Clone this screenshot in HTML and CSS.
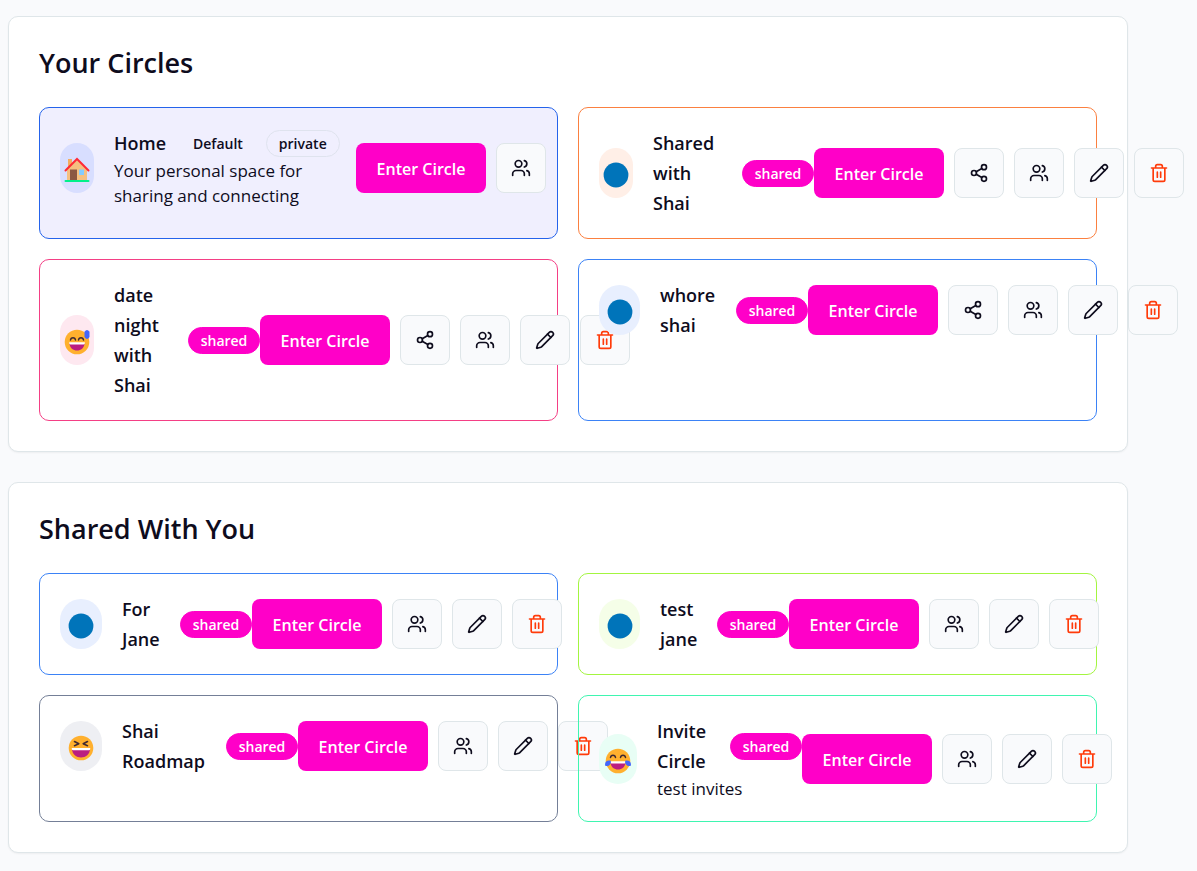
FILE: index.html
```html
<!DOCTYPE html>
<html lang="en">
<head>
<meta charset="utf-8">
<meta name="viewport" content="width=device-width, initial-scale=1">
<title>Circles</title>
<link rel="stylesheet" href="styles.css">
</head>
<body>
<svg class="sprite" aria-hidden="true">
  <symbol id="users" viewBox="0 0 24 24"><path d="M16 21v-2a4 4 0 0 0-4-4H6a4 4 0 0 0-4 4v2"/><circle cx="9" cy="7" r="4"/><path d="M22 21v-2a4 4 0 0 0-3-3.87M16 3.13a4 4 0 0 1 0 7.75"/></symbol>
  <symbol id="share" viewBox="0 0 24 24"><circle cx="18" cy="5" r="3"/><circle cx="6" cy="12" r="3"/><circle cx="18" cy="19" r="3"/><path d="M8.59 13.51l6.83 3.98M15.41 6.51l-6.82 3.98"/></symbol>
  <symbol id="pencil" viewBox="0 0 24 24"><path d="M21.174 6.812a1 1 0 0 0-3.986-3.987L3.842 16.174a2 2 0 0 0-.5.83l-1.321 4.352a.5.5 0 0 0 .623.622l4.353-1.32a2 2 0 0 0 .83-.497z"/><path d="m15 5 4 4"/></symbol>
  <symbol id="trash" viewBox="0 0 24 24"><path d="M3 6h18M19 6v14c0 1-1 2-2 2H7c-1 0-2-1-2-2V6M8 6V4c0-1 1-2 2-2h4c1 0 2 1 2 2v2M10 11v6M14 11v6"/></symbol>
  <symbol id="dot" viewBox="0 0 26 26"><circle cx="13" cy="13" r="12.4" fill="#0074ba"/></symbol>
  <symbol id="house" viewBox="0 0 26 26">
    <path d="M4 2h4v8H4z" fill="#f3ad61"/><path d="M3 12.5 13 3l10 9.5V24H3z" fill="#f5bf80"/>
    <path d="M6 12.5h7V24H6z" fill="#8b5742"/><path d="M15 12.5h5V18h-5z" fill="#83cbff"/>
    <path d="M1.5 13.5 13 2l11.5 11.5" fill="none" stroke="#ff2a36" stroke-width="2" stroke-linecap="round"/>
    <path d="M1.5 24h23" stroke="#00f08a" stroke-width="2" stroke-linecap="round"/>
  </symbol>
  <symbol id="sweat" viewBox="0 0 26 26">
    <circle cx="13" cy="13" r="12.3" fill="#ffb02e"/>
    <path d="M6.5 11c.4-3 4.6-3 5 0M14.5 11c.4-3 4.6-3 5 0" fill="none" stroke="#402a32" stroke-width="1.5" stroke-linecap="round"/>
    <path d="M5.5 14h15c0 10-15 10-15 0z" fill="#bb1d80"/><path d="M5.2 13.3h15.6v1.2q-.3 1-1.3 1h-13q-1 0-1.3-1z" fill="#fff"/>
    <path d="M20.5 2.8Q23 -1 25.5 2.800V8q-2.500 4-5 0z" fill="#4366fa"/>
  </symbol>
  <symbol id="squint" viewBox="0 0 26 26">
    <circle cx="13" cy="13" r="12.3" fill="#ffb02e"/>
    <path d="M6.5 6.5l4.3 2.2-4.3 2M19.5 6.5l-4.3 2.2 4.3 2" fill="none" stroke="#402a32" stroke-width="1.6" stroke-linecap="round" stroke-linejoin="round"/>
    <path d="M4 13.5h18c0 12-18 12-18 0z" fill="#bb1d80"/><path d="M3.8 13h18.4v1.2q-.3 1-1.3 1H5.100q-1 0-1.300-1z" fill="#fff"/>
  </symbol>
  <symbol id="joy" viewBox="0 0 26 26">
    <circle cx="13" cy="13" r="12.3" fill="#ffb02e"/>
    <path d="M5.5 9.5c.4-3 4.6-3 5 0M15.5 9.5c.4-3 4.6-3 5 0" fill="none" stroke="#402a32" stroke-width="1.5" stroke-linecap="round"/>
    <path d="M5.5 14h15c0 10-15 10-15 0z" fill="#bb1d80"/><path d="M5.2 13.3h15.6v1.2q-.3 1-1.3 1h-13q-1 0-1.3-1z" fill="#fff"/>
    <path d="M5.5 12.5C1 12 0 14 0 17.5q3 1.5 5-1 1.5-2 .5-4zM20.5 12.5C25 12 26 14 26 17.5q-3 1.5-5-1-1.5-2-.5-4z" fill="#4366fa"/>
  </symbol>
</svg>
<main class="page">
  <section class="panel" aria-labelledby="yours">
    <h2 class="panel-title" id="yours">Your Circles</h2>
    <div class="grid">
      <article class="card home">
        <div class="row">
          <span class="avatar"><svg class="emoji"><use href="#house"/></svg></span>
          <div class="info"><div class="heading"><h3 class="name">Home</h3><span class="badge plain">Default</span><span class="badge outline">private</span></div><p class="desc">Your personal space for sharing and connecting</p></div>
          <div class="actions"><button class="enter">Enter Circle</button><button class="tool" aria-label="Members"><svg class="icon"><use href="#users"/></svg></button></div>
        </div>
      </article>
      <article class="card orange">
        <div class="row">
          <span class="avatar"><svg class="emoji"><use href="#dot"/></svg></span>
          <div class="info"><div class="heading"><h3 class="name">Shared with Shai</h3><span class="badge shared">shared</span></div></div>
          <div class="actions"><button class="enter">Enter Circle</button><button class="tool" aria-label="Share"><svg class="icon"><use href="#share"/></svg></button><button class="tool" aria-label="Members"><svg class="icon"><use href="#users"/></svg></button><button class="tool" aria-label="Edit"><svg class="icon"><use href="#pencil"/></svg></button><button class="tool danger" aria-label="Delete"><svg class="icon"><use href="#trash"/></svg></button></div>
        </div>
      </article>
      <article class="card pink">
        <div class="row">
          <span class="avatar"><svg class="emoji"><use href="#sweat"/></svg></span>
          <div class="info"><div class="heading"><h3 class="name">date night with Shai</h3><span class="badge shared">shared</span></div></div>
          <div class="actions"><button class="enter">Enter Circle</button><button class="tool" aria-label="Share"><svg class="icon"><use href="#share"/></svg></button><button class="tool" aria-label="Members"><svg class="icon"><use href="#users"/></svg></button><button class="tool" aria-label="Edit"><svg class="icon"><use href="#pencil"/></svg></button><button class="tool danger" aria-label="Delete"><svg class="icon"><use href="#trash"/></svg></button></div>
        </div>
      </article>
      <article class="card blue">
        <div class="row">
          <span class="avatar"><svg class="emoji"><use href="#dot"/></svg></span>
          <div class="info"><div class="heading"><h3 class="name">whore shai</h3><span class="badge shared">shared</span></div></div>
          <div class="actions"><button class="enter">Enter Circle</button><button class="tool" aria-label="Share"><svg class="icon"><use href="#share"/></svg></button><button class="tool" aria-label="Members"><svg class="icon"><use href="#users"/></svg></button><button class="tool" aria-label="Edit"><svg class="icon"><use href="#pencil"/></svg></button><button class="tool danger" aria-label="Delete"><svg class="icon"><use href="#trash"/></svg></button></div>
        </div>
      </article>
    </div>
  </section>
  <section class="panel" aria-labelledby="shared">
    <h2 class="panel-title" id="shared">Shared With You</h2>
    <div class="grid">
      <article class="card blue narrow">
        <div class="row">
          <span class="avatar"><svg class="emoji"><use href="#dot"/></svg></span>
          <div class="info"><div class="heading"><h3 class="name">For Jane</h3><span class="badge shared">shared</span></div></div>
          <div class="actions"><button class="enter">Enter Circle</button><button class="tool" aria-label="Members"><svg class="icon"><use href="#users"/></svg></button><button class="tool" aria-label="Edit"><svg class="icon"><use href="#pencil"/></svg></button><button class="tool danger" aria-label="Delete"><svg class="icon"><use href="#trash"/></svg></button></div>
        </div>
      </article>
      <article class="card lime">
        <div class="row">
          <span class="avatar"><svg class="emoji"><use href="#dot"/></svg></span>
          <div class="info"><div class="heading"><h3 class="name">test jane</h3><span class="badge shared">shared</span></div></div>
          <div class="actions"><button class="enter">Enter Circle</button><button class="tool" aria-label="Members"><svg class="icon"><use href="#users"/></svg></button><button class="tool" aria-label="Edit"><svg class="icon"><use href="#pencil"/></svg></button><button class="tool danger" aria-label="Delete"><svg class="icon"><use href="#trash"/></svg></button></div>
        </div>
      </article>
      <article class="card slate">
        <div class="row">
          <span class="avatar"><svg class="emoji"><use href="#squint"/></svg></span>
          <div class="info"><div class="heading"><h3 class="name">Shai Roadmap</h3><span class="badge shared">shared</span></div></div>
          <div class="actions"><button class="enter">Enter Circle</button><button class="tool" aria-label="Members"><svg class="icon"><use href="#users"/></svg></button><button class="tool" aria-label="Edit"><svg class="icon"><use href="#pencil"/></svg></button><button class="tool danger" aria-label="Delete"><svg class="icon"><use href="#trash"/></svg></button></div>
        </div>
      </article>
      <article class="card mint">
        <div class="row">
          <span class="avatar"><svg class="emoji"><use href="#joy"/></svg></span>
          <div class="info"><div class="heading"><h3 class="name">Invite Circle</h3><span class="badge shared">shared</span></div><p class="desc">test invites</p></div>
          <div class="actions"><button class="enter">Enter Circle</button><button class="tool" aria-label="Members"><svg class="icon"><use href="#users"/></svg></button><button class="tool" aria-label="Edit"><svg class="icon"><use href="#pencil"/></svg></button><button class="tool danger" aria-label="Delete"><svg class="icon"><use href="#trash"/></svg></button></div>
        </div>
      </article>
    </div>
  </section>
</main>
</body>
</html>
```

FILE: styles.css
```css
* { box-sizing: border-box; }
body {
  margin: 0;
  background: #f9fafc;
  color: #0e0c1d;
  font-family: "Segoe UI", "Open Sans", "Noto Sans", sans-serif;
}
h2, h3, p { margin: 0; }
.sprite { display: none; }

.page {
  display: flex;
  flex-direction: column;
  gap: 30px;
  padding: 16px 69px 16px 8px;
}
.panel {
  padding: 30px;
  background: #fff;
  border: 1px solid #dfe6e9;
  border-radius: 10px;
  box-shadow: 0 1px 2px rgb(0 0 0 / 5%);
}
.panel-title {
  margin-bottom: 28px;
  font-size: 27px;
  line-height: 32px;
  font-weight: 600;
}
.grid {
  display: grid;
  grid-template-columns: repeat(2, minmax(0, 1fr));
  gap: 20px;
}

.card {
  --avatar: 34px;
  --name: 79px;
  --tone: #3b82f6;
  --tint: #e8effe;
  padding: 20px;
  border: 1px solid var(--tone);
  border-radius: 10px;
}
.home { --name: 56px; --tone: #2563eb; --tint: #d8deff; background: #f0effe; }
.orange { --tone: #fb8040; --tint: #ffefe7; }
.pink { --name: 64px; --tone: #f43f85; --tint: #fee8f0; }
.blue { --avatar: 41px; --name: 66px; }
.lime { --avatar: 41px; --name: 47px; --tone: #a3f540; --tint: #f5fee8; }
.narrow { --avatar: 42px; --name: 48px; }
.slate { --avatar: 42px; --name: 94px; --tone: #747f97; --tint: #eeeff3; }
.mint { --avatar: 38px; --name: 63px; --tone: #3ff5b0; --tint: #e8fef5; }

.row, .heading, .actions { display: flex; align-items: center; }
.avatar {
  display: flex;
  flex: none;
  align-items: center;
  justify-content: center;
  width: var(--avatar);
  height: 50px;
  margin-right: 20px;
  padding-top: 4px;
  border-radius: 25px;
  background: var(--tint);
}
.emoji { flex: none; width: 26px; height: 26px; }
.info { flex: none; }
.home .info { width: 242px; }
.home .desc { width: 200px; }
.heading { gap: 10px; min-height: 30px; }
.name {
  flex: none;
  width: var(--name);
  font-size: 18px;
  line-height: 30px;
  font-weight: 600;
}
.desc { font-size: 17px; line-height: 25px; }
.badge {
  flex: none;
  padding: 2px 12px;
  border: 1px solid #ff00c8;
  border-radius: 14px;
  background: #ff00c8;
  color: #fff;
  font-size: 14px;
  line-height: 21px;
  font-weight: 600;
}
.shared { width: 72px; padding: 2px 0; text-align: center; }
.plain, .outline { border-color: transparent; background: none; color: inherit; }
.outline { border-color: #dfe3ee; }

.actions { flex: none; gap: 10px; }
.enter, .tool {
  flex: none;
  height: 50px;
  padding: 0;
  border-radius: 8px;
  font: inherit;
  cursor: pointer;
}
.enter {
  width: 130px;
  padding-top: 2px;
  border: 0;
  background: #ff00c8;
  color: #fff;
  font-size: 16px;
  font-weight: 600;
}
.tool {
  display: flex;
  align-items: center;
  justify-content: center;
  width: 50px;
  border: 1px solid #dfe6e9;
  background: #f9fafc;
  color: #0e0c1d;
}
.danger { color: #ff3b0a; }
.icon {
  width: 20px;
  height: 20px;
  fill: none;
  stroke: currentColor;
  stroke-width: 2;
  stroke-linecap: round;
  stroke-linejoin: round;
}
```
